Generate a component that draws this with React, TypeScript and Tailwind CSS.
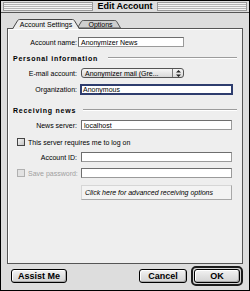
import type { ReactNode } from "react";

const stripes =
  "flex-1 h-[9px] border border-[#9a9a9a] bg-[repeating-linear-gradient(to_bottom,#f4f4f4_0_1px,#b4b4b4_1px_2px)]";

function Field({ className, children }: { className: string; children?: ReactNode }) {
  return (
    <div
      className={`flex h-full items-center border border-[#6e6e6e] border-b-[#9a9a9a] border-r-[#9a9a9a] bg-white pl-[2px] ${className}`}
    >
      {children}
    </div>
  );
}

function Row({ label, className, children }: { label: ReactNode; className: string; children: ReactNode }) {
  return (
    <div className={`flex items-center ${className}`}>
      <span className="w-[70px] shrink-0 pr-[1px] text-right">{label}</span>
      {children}
    </div>
  );
}

function Heading({ title, gap }: { title: string; gap: string }) {
  return (
    <div className="flex items-center h-[10px]">
      <span className="ml-[5px] font-bold tracking-[0.75px]">{title}</span>
      <div className={`flex-1 mr-[5px] h-[2px] border-t border-[#9c9c9c] border-b border-b-white ${gap}`} />
    </div>
  );
}

function Checkbox({ disabled }: { disabled?: boolean }) {
  return (
    <span
      className={`inline-block w-[8px] h-[8px] shrink-0 border ${
        disabled ? "border-[#b0b0b0] bg-[#e2e2e2]" : "border-[#444] bg-[linear-gradient(135deg,#f4f4f4,#c4c4c4)]"
      }`}
    />
  );
}

function Button({ children, className }: { children: ReactNode; className: string }) {
  return (
    <div
      className={`flex h-[14px] items-center justify-center rounded-[3px] border border-black bg-[linear-gradient(to_bottom,#f2f2f2,#d2d2d2)] text-[9px] font-bold shadow-[inset_-1px_-1px_0_#a8a8a8,inset_1px_1px_0_#ffffff] ${className}`}
    >
      {children}
    </div>
  );
}

export default function App() {
  return (
    <div className="w-[250px] h-[291px] flex flex-col border border-black bg-[#dddddd] text-[7px] leading-none text-black font-['Liberation_Sans',Arial,sans-serif]">
      {/* title bar */}
      <div className="flex h-[12px] items-center gap-[4px] border-b border-[#555] px-[2px]">
        <div className={stripes} />
        <span className="text-[9px] font-bold">Edit Account</span>
        <div className={stripes} />
      </div>

      {/* tabs */}
      <div className="flex h-[9px] items-start pl-[11px] mt-[6px]">
        <div className="relative z-10 flex h-[10px] w-[68px] items-center justify-center">
          <svg className="absolute inset-0" width="68" height="10" viewBox="0 0 68 10">
            <path
              d="M0.5 10 L5.6 1.6 Q6.2 0.5 7.6 0.5 L60.4 0.5 Q61.8 0.5 62.4 1.6 L67.5 10"
              fill="#eeeeee"
              stroke="#444"
            />
          </svg>
          <span className="relative pt-[1px]">Account Settings</span>
        </div>
        <div className="relative ml-[-3px] mt-[1px] flex h-[8px] w-[44px] items-center justify-center">
          <svg className="absolute inset-0" width="44" height="8" viewBox="0 0 44 8">
            <path
              d="M0.5 8 L4.4 1.4 Q5 0.5 6.2 0.5 L37.8 0.5 Q39 0.5 39.6 1.4 L43.5 8 Z"
              fill="#cfcfcf"
              stroke="#555"
            />
          </svg>
          <span className="relative pl-[3px] pt-[1px]">Options</span>
        </div>
      </div>

      {/* panel */}
      <div className="mx-[6px] flex h-[236px] flex-col border border-[#555] bg-[#eeeeee] shadow-[inset_1px_1px_0_#ffffff]">
        <Row label="Account name:" className="mt-[8px] h-[10px]">
          <Field className="w-[106px]">Anonymizer News</Field>
        </Row>

        <div className="mt-[6px]">
          <Heading title="Personal information" gap="ml-[10px]" />
        </div>

        <Row label="E-mail account:" className="mt-[5px] h-[10px]">
          <div className="ml-[3px] flex h-full w-[103px] items-center rounded-[3px] border border-[#555] bg-[linear-gradient(to_bottom,#f6f6f6,#d8d8d8)]">
            <span className="flex-1 pl-[3px]">Anonymizer mail (Gre...</span>
            <span className="flex h-full w-[11px] items-center justify-center border-l border-[#777]">
              <svg width="5" height="7" viewBox="0 0 5 7">
                <path d="M2.5 0 L5 2.6 L0 2.6 Z M0 4.4 L5 4.4 L2.5 7 Z" fill="#222" />
              </svg>
            </span>
          </div>
        </Row>

        <Row label="Organization:" className="mt-[6px] h-[11px]">
          <div className="ml-[2px] h-full w-[153px] border-2 border-[#2e3d6e] bg-white pl-[1px] flex items-center">
            Anonymous
          </div>
        </Row>

        <div className="mt-[10px]">
          <Heading title="Receiving news" gap="ml-[7px]" />
        </div>

        <Row label="News server:" className="mt-[5px] h-[10px]">
          <Field className="ml-[3px] w-[151px]">localhost</Field>
        </Row>

        <div className="mt-[7px] flex h-[10px] items-center pl-[9px]">
          <Checkbox />
          <span className="ml-[3px]">This server requires me to log on</span>
        </div>

        <Row label="Account ID:" className="mt-[5px] h-[10px]">
          <Field className="ml-[3px] w-[151px]" />
        </Row>

        <div className="mt-[6px] flex h-[10px] items-center">
          <span className="flex w-[70px] shrink-0 items-center pl-[9px] text-[#a0a0a0]">
            <Checkbox disabled />
            <span className="ml-[3px]">Save password:</span>
          </span>
          <Field className="ml-[3px] w-[151px]" />
        </div>

        <div className="mt-[7px] ml-[73px] flex h-[15px] w-[151px] items-center border border-[#d6d6d6] border-b-[#a8a8a8] border-r-[#a8a8a8] bg-[#f3f3f3] pl-[3px] italic">
          Click here for advanced receiving options
        </div>
      </div>

      {/* buttons */}
      <div className="mt-[2px] flex h-[20px] items-center pl-[10px] pr-[6px]">
        <Button className="w-[56px]">Assist Me</Button>
        <div className="flex-1" />
        <Button className="w-[48px]">Cancel</Button>
        <div className="ml-[4px] flex h-[20px] w-[52px] items-center justify-center rounded-[5px] border-2 border-[#1c1c1c] bg-[#d4d4d4]">
          <Button className="w-[46px]">OK</Button>
        </div>
      </div>
    </div>
  );
}
